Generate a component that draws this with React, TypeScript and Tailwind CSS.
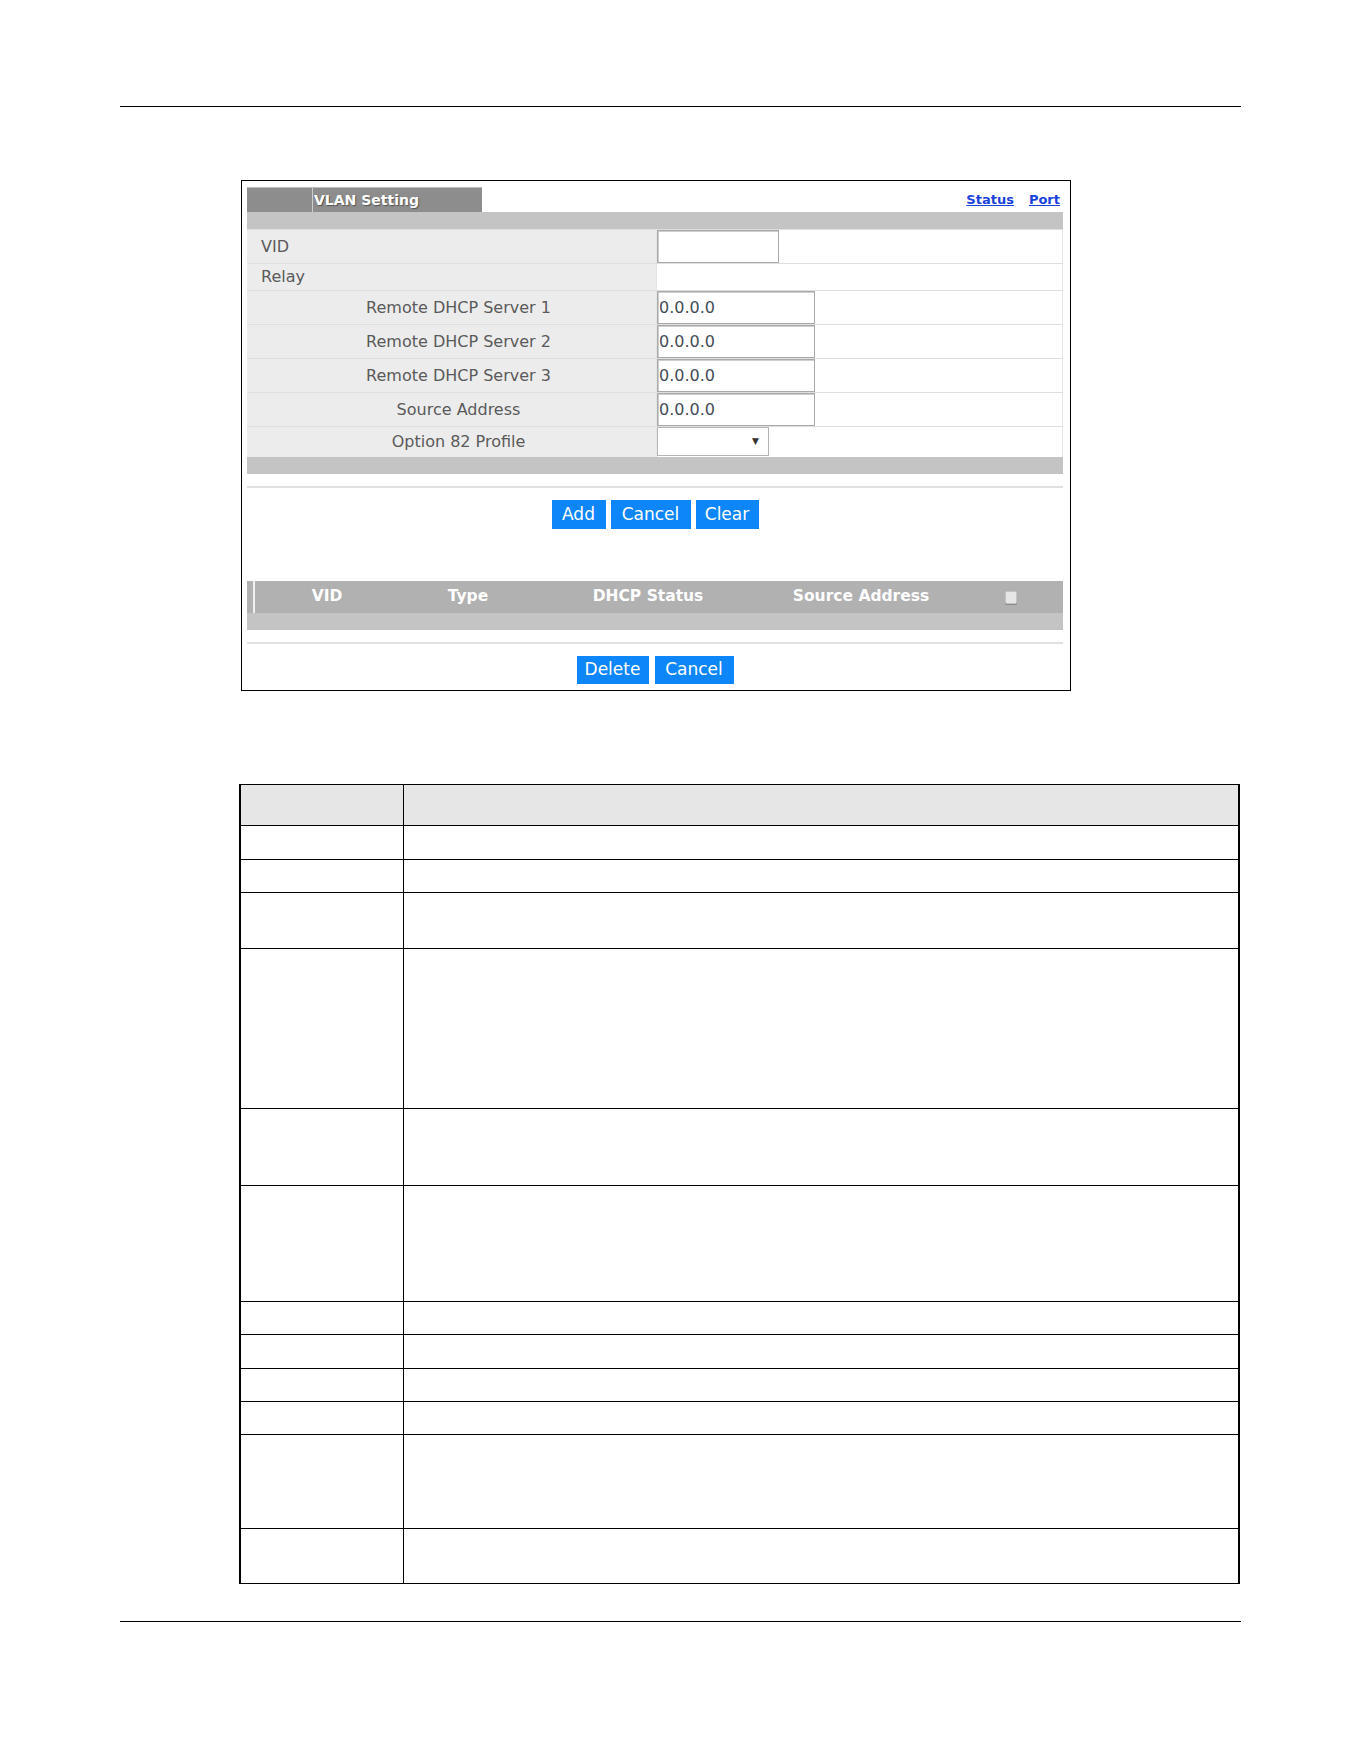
import React from "react";

const F = "font-['DejaVu_Sans',sans-serif]";

function LabelRow({
  label,
  h,
  center,
  children,
}: {
  label: string;
  h: string;
  center?: boolean;
  children?: React.ReactNode;
}) {
  return (
    <div className={`flex ${h} border-t border-[#dfdfdf]`}>
      <div
        className={`w-[409px] shrink-0 bg-[#ececec] flex items-center text-[16px] text-[#5a5a5a] ${
          center ? "pl-[14px] justify-center" : "pl-[14px]"
        }`}
      >
        {label}
      </div>
      <div className="flex-1 bg-white border-l border-[#e6e6e6] border-r border-[#dcdcdc] flex items-stretch">
        {children}
      </div>
    </div>
  );
}

function IpInput() {
  return (
    <div className="w-[158px] h-full border border-[#a9a9a9] shadow-[inset_1px_1px_0_#cfcfcf] bg-white flex items-center pl-[1px] text-[16px] text-[#454c58]">
      0.0.0.0
    </div>
  );
}

function Btn({ w, children }: { w: string; children: React.ReactNode }) {
  return (
    <div
      className={`${w} h-full bg-[#0d86fa] text-white text-[17px] flex items-center justify-center`}
    >
      {children}
    </div>
  );
}

export default function App() {
  return (
    <div className={`w-[1361px] h-[1761px] bg-white ${F} relative`}>
      <div className="pt-[106px]">
        <div className="ml-[120px] w-[1121px] h-px bg-black" />

        {/* Screenshot box */}
        <div className="mt-[73px] ml-[241px] w-[830px] h-[511px] border border-black pl-[5px] pr-[7px] pt-[6px]">
          {/* tab row */}
          <div className="flex h-[25px] items-center justify-between">
            <div className="w-[235px] h-full bg-[#8d8d8d] border-t border-[#bcbcbc] flex items-stretch">
              <div className="w-[65px]" />
              <div className="w-px bg-[#cdcdcd]" />
              <div className="flex items-center pl-[1px] text-white font-bold text-[14px] [text-shadow:1px_1px_1px_#555]">
                VLAN Setting
              </div>
            </div>
            <div className="flex items-center gap-[15px] pr-[3px] text-[13px] font-bold text-[#1b43dc] underline">
              <span>Status</span>
              <span>Port</span>
            </div>
          </div>
          <div className="h-[17px] bg-[#c4c4c4]" />

          <LabelRow label="VID" h="h-[34px]">
            <div className="w-[122px] h-full border border-[#a9a9a9] shadow-[inset_1px_1px_0_#cfcfcf] bg-white" />
          </LabelRow>
          <LabelRow label="Relay" h="h-[27px]" />
          <LabelRow label="Remote DHCP Server 1" h="h-[34px]" center>
            <IpInput />
          </LabelRow>
          <LabelRow label="Remote DHCP Server 2" h="h-[34px]" center>
            <IpInput />
          </LabelRow>
          <LabelRow label="Remote DHCP Server 3" h="h-[34px]" center>
            <IpInput />
          </LabelRow>
          <LabelRow label="Source Address" h="h-[34px]" center>
            <IpInput />
          </LabelRow>
          <LabelRow label="Option 82 Profile" h="h-[31px]" center>
            <div className="w-[112px] h-[29px] border border-[#b5b5b5] bg-white flex items-center justify-end pr-[9px] text-[9px] text-[#333]">
              ▼
            </div>
          </LabelRow>
          <div className="h-[17px] bg-[#c4c4c4]" />

          <div className="mt-[12px] h-[2px] bg-[#e1e1e1]" />
          <div className="mt-[12px] h-[29px] flex justify-center gap-[5px]">
            <Btn w="w-[54px]">Add</Btn>
            <Btn w="w-[80px]">Cancel</Btn>
            <Btn w="w-[63px]">Clear</Btn>
          </div>

          {/* list header */}
          <div className="mt-[52px] h-[32px] bg-[#b1b1b1] flex items-stretch text-white font-bold text-[15.5px]">
            <div className="w-[6px]" />
            <div className="w-[2px] bg-[#f0f0f0]" />
            <div className="w-[144px] flex items-center justify-center">VID</div>
            <div className="w-[138px] flex items-center justify-center">Type</div>
            <div className="w-[222px] flex items-center justify-center">DHCP Status</div>
            <div className="w-[204px] flex items-center justify-center">Source Address</div>
            <div className="w-[96px] flex items-center justify-center">
              <div className="w-[12px] h-[13px] rounded-[2px] bg-[#e6e6e6] border border-[#c4c4c4] shadow-[0_1px_0_#8a8a8a]" />
            </div>
          </div>
          <div className="h-[17px] bg-[#c4c4c4]" />
          <div className="mt-[12px] h-[2px] bg-[#e1e1e1]" />
          <div className="mt-[12px] h-[28px] flex justify-center gap-[6px]">
            <Btn w="w-[72px]">Delete</Btn>
            <Btn w="w-[79px]">Cancel</Btn>
          </div>
        </div>

        {/* Description table */}
        <div className="mt-[93px] ml-[239px] w-[1001px] border-l-2 border-r-2 border-t border-b border-black">
          {[40, 34, 33, 56, 160, 77, 116, 33, 34, 33, 33, 94, 55].map((h, i) => (
            <div
              key={i}
              className={`flex ${i > 0 ? "border-t border-black" : ""} ${
                i === 0 ? "bg-[#e6e6e6]" : ""
              }`}
              style={{ height: i === 0 ? h : h }}
            >
              <div className="w-[163px] shrink-0 border-r border-black" />
              <div className="flex-1" />
            </div>
          ))}
        </div>

        <div className="mt-[37px] ml-[120px] w-[1121px] h-px bg-black" />
      </div>
    </div>
  );
}
